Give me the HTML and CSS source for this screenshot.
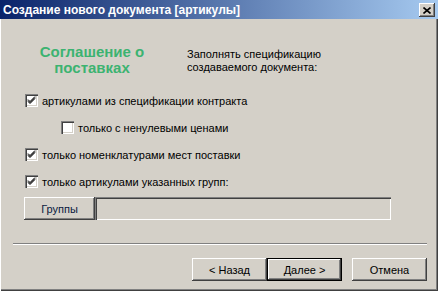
FILE: index.html
```html
<!DOCTYPE html>
<html lang="ru">
<head>
  <meta charset="UTF-8" />
  <title>Создание нового документа</title>
  <link rel="stylesheet" href="styles.css">
</head>
<body>

<div class="window">
  <div class="titlebar">
    <span class="title">Создание нового документа [артикулы]</span>
    <span class="close">
      <svg width="8" height="7" viewBox="0 0 8 7">
        <path d="M0.5 0.5 L7.5 6.5 M7.5 0.5 L0.5 6.5" stroke="#000" stroke-width="1.6" fill="none"/>
      </svg>
    </span>
  </div>

  <div class="content">
    <div class="intro">
      <div class="caption">Соглашение о<br>поставках</div>
      <div class="hint">Заполнять спецификацию<br>создаваемого документа:</div>
    </div>

    <div class="options">
      <div class="check"><span class="box on"></span>артикулами из спецификации контракта</div>
      <div class="check sub"><span class="box"></span>только с ненулевыми ценами</div>
      <div class="check"><span class="box on"></span>только номенклатурами мест поставки</div>
      <div class="check"><span class="box on"></span>только артикулами указанных групп:</div>
    </div>

    <div class="groups">
      <div class="btn small">Группы</div>
      <div class="field"></div>
    </div>
  </div>

  <div class="sep"></div>

  <div class="footer">
    <div class="btn">&lt; Назад</div>
    <div class="btn default">Далее &gt;</div>
    <div class="btn cancel">Отмена</div>
  </div>
</div>

</body>
</html>
```

FILE: styles.css
```css
html, body {
  margin: 0;
  padding: 0;
  background: #d4d0c8;
  font-family: 'Liberation Sans', Arial, sans-serif;
  font-size: 11px;
  color: #000;
}

.window {
  width: 438px;
  height: 291px;
  box-sizing: border-box;
  background: #d4d0c8;
  box-shadow: inset 1px 0 #fff, inset -1px -1px #404040, inset -2px -2px #808080;
  overflow: hidden;
}

.titlebar {
  height: 19px;
  display: flex;
  align-items: center;
  justify-content: space-between;
  padding: 0 3px 0 3px;
  background: linear-gradient(to right, #0a246a, #a6caf0);
}

.title {
  color: #fff;
  font-weight: bold;
  font-size: 12px;
}

.close {
  width: 16px;
  height: 14px;
  box-sizing: border-box;
  display: flex;
  align-items: center;
  justify-content: center;
  background: #d4d0c8;
  box-shadow: inset -1px -1px #404040, inset 1px 1px #fff, inset -2px -2px #808080;
  margin-top: 1px;
}

.intro {
  display: flex;
  padding-top: 25px;
  height: 32px;
}

.caption {
  width: 150px;
  margin-left: 17px;
  text-align: center;
  color: #3cb371;
  font-weight: bold;
  font-size: 15px;
  line-height: 16px;
}

.hint {
  margin-left: 20px;
  margin-top: 4px;
  line-height: 13px;
}

.options {
  margin-top: 11px;
}

.check {
  height: 27px;
  display: flex;
  align-items: center;
  padding-left: 25px;
}

.check.sub {
  padding-left: 61px;
}

.box {
  width: 13px;
  height: 13px;
  box-sizing: border-box;
  margin-right: 4px;
  background: #fff;
  box-shadow: inset 1px 1px #808080, inset 2px 2px #404040, inset -1px -1px #fff, inset -2px -2px #d4d0c8;
}

.box.on {
  background: #fff url("data:image/svg+xml,%3Csvg xmlns='http://www.w3.org/2000/svg' width='13' height='13'%3E%3Cpath d='M3 5.5 L5 7.5 L10 2.5 M3 6.5 L5 8.5 L10 3.5 M3 7.5 L5 9.5 L10 4.5' stroke='%23000' fill='none'/%3E%3C/svg%3E") no-repeat;
  box-shadow: inset 1px 1px #808080, inset 2px 2px #404040, inset -1px -1px #fff, inset -2px -2px #d4d0c8;
}

.groups {
  display: flex;
  margin-top: 2px;
  padding-left: 24px;
}

.btn {
  width: 75px;
  height: 23px;
  box-sizing: border-box;
  display: flex;
  align-items: center;
  justify-content: center;
  background: #d4d0c8;
  box-shadow: inset -1px -1px #404040, inset 1px 1px #fff, inset -2px -2px #808080;
}

.btn.small {
  width: 71px;
  color: #0a1a40;
}

.field {
  width: 296px;
  height: 23px;
  box-sizing: border-box;
  box-shadow: inset 1px 1px #808080, inset 2px 2px #404040, inset -1px -1px #fff, inset -2px -2px #d4d0c8;
}

.sep {
  margin: 23px 11px 0 13px;
  border-top: 1px solid #808080;
  border-bottom: 1px solid #fff;
}

.footer {
  display: flex;
  justify-content: flex-end;
  margin-top: 13px;
  padding-right: 11px;
}

.btn.default {
  border: 1px solid #000;
}

.btn.cancel {
  margin-left: 10px;
}
```
